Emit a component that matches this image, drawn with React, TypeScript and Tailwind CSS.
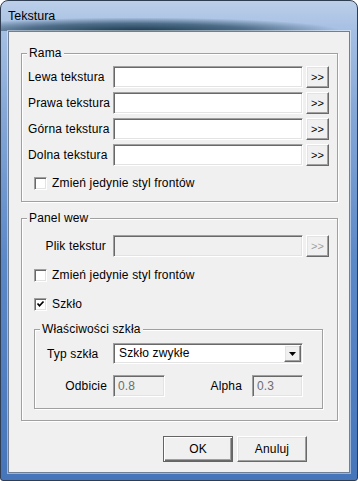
import React from 'react';

const sunken =
  'border border-t-[#a0a0a0] border-l-[#a0a0a0] border-b-white border-r-white shadow-[inset_1px_1px_0_#696969,inset_-1px_-1px_0_#e3e3e3]';
const raised =
  'border border-t-white border-l-white border-b-[#696969] border-r-[#696969] shadow-[inset_-1px_-1px_0_#a0a0a0,inset_1px_1px_0_#e3e3e3] bg-[#f0f0f0]';

function GroupBox({ title, className, children }) {
  return (
    <div
      className={`relative border border-[#a0a0a0] shadow-[inset_1px_1px_0_#fff,1px_1px_0_#fff] ${className}`}
    >
      <span className="absolute -top-[8px] left-[5px] px-[2px] bg-[#f0f0f0] leading-[14px]">
        {title}
      </span>
      {children}
    </div>
  );
}

function Checkbox({ checked = false }) {
  return (
    <span className={`w-[13px] h-[13px] bg-white flex items-center justify-center ${sunken}`}>
      {checked && (
        <svg width="9" height="9" viewBox="0 0 9 9">
          <path d="M1.5 3.5 L3.5 5.8 L7.5 1.5" fill="none" stroke="#000" strokeWidth="1.7" />
        </svg>
      )}
    </span>
  );
}

function TextureRow({ label, disabled = false, right = false }) {
  return (
    <div className="flex items-center h-[22px]">
      <span className={`w-[85px] ${right ? 'text-right pr-[7px]' : ''}`}>{label}</span>
      <div className={`w-[190px] h-[22px] ${disabled ? 'bg-[#f0f0f0]' : 'bg-white'} ${sunken}`} />
      <button
        className={`ml-[3px] w-[23px] h-[22px] flex items-center justify-center text-[11px] leading-none ${raised} ${
          disabled ? 'text-[#a0a0a0]' : 'text-black'
        }`}
      >
        &gt;&gt;
      </button>
    </div>
  );
}

function CheckRow({ label, checked = false }) {
  return (
    <div className="flex items-center h-[22px] pl-[6px] gap-[5px]">
      <Checkbox checked={checked} />
      <span>{label}</span>
    </div>
  );
}

export default function App() {
  return (
    <div className="w-[358px] h-[481px] rounded-t-[8px] rounded-b-[3px] border border-[#2f3d52] bg-[linear-gradient(180deg,#bccfe9_0px,#a5bfe3_30px,#86a8d7_110px,#5b88c7_260px,#4675ba_481px)] flex flex-col font-['Liberation_Sans',Arial,sans-serif] text-[12px] tracking-[0.15px] text-black overflow-hidden">
      <div className="h-[30px] pl-[7px] pt-[8px] leading-[14px] text-[12.5px] tracking-normal bg-[radial-gradient(70%_55%_at_38%_100%,rgba(20,52,72,0.95)_0%,rgba(28,62,86,0.65)_45%,transparent_82%)]">
        Tekstura
      </div>
      <div className="px-[7px] pb-[7px]">
        <div className="w-[342px] h-[442px] bg-[#f0f0f0] border border-[#6e7f96] shadow-[0_0_0_1px_rgba(255,255,255,0.45)] flex flex-col">
          <GroupBox title="Rama" className="mt-[21px] ml-[12px] w-[317px] pt-[12px] pl-[6px] pb-[7px]">
            <div className="flex flex-col gap-[4px]">
              <TextureRow label="Lewa tekstura" />
              <TextureRow label="Prawa tekstura" />
              <TextureRow label="Górna tekstura" />
              <TextureRow label="Dolna tekstura" />
            </div>
            <div className="mt-[6px]">
              <CheckRow label="Zmień jedynie styl frontów" />
            </div>
          </GroupBox>

          <GroupBox title="Panel wew" className="mt-[16px] ml-[12px] w-[317px] pt-[16px] pl-[6px] pb-[11px]">
            <TextureRow label="Plik tekstur" disabled right />
            <div className="mt-[7px]">
              <CheckRow label="Zmień jedynie styl frontów" />
            </div>
            <div className="mt-[7px]">
              <CheckRow label="Szkło" checked />
            </div>
            <GroupBox
              title="Właściwości szkła"
              className="mt-[14px] ml-[6px] w-[289px] pt-[13px] pl-[12px] pb-[11px]"
            >
              <div className="flex items-center h-[21px]">
                <span className="w-[66px]">Typ szkła</span>
                <div className={`w-[190px] h-[21px] bg-white p-[1px] flex ${sunken}`}>
                  <span className="flex-1 pl-[4px] leading-[17px]">Szkło zwykłe</span>
                  <span className={`w-[17px] h-full flex items-center justify-center ${raised}`}>
                    <svg width="7" height="4" viewBox="0 0 7 4">
                      <path d="M0 0 H7 L3.5 4 Z" fill="#000" />
                    </svg>
                  </span>
                </div>
              </div>
              <div className="mt-[11px] flex items-center h-[22px]">
                <span className="w-[66px] text-right pr-[6px]">Odbicie</span>
                <div className={`w-[52px] h-[22px] bg-[#f0f0f0] pl-[4px] leading-[20px] text-[#6d6d6d] ${sunken}`}>
                  0.8
                </div>
                <span className="w-[87px] text-right pr-[10px]">Alpha</span>
                <div className={`w-[51px] h-[22px] bg-[#f0f0f0] pl-[4px] leading-[20px] text-[#6d6d6d] ${sunken}`}>
                  0.3
                </div>
              </div>
            </GroupBox>
          </GroupBox>

          <div className="mt-[15px] flex justify-end gap-[4px] pr-[42px]">
            <button className="w-[70px] h-[26px] border border-[#646464] bg-[#f0f0f0] shadow-[inset_1px_1px_0_#fff,inset_-1px_-1px_0_#696969,inset_-2px_-2px_0_#a0a0a0]">
              OK
            </button>
            <button className={`w-[70px] h-[26px] ${raised}`}>Anuluj</button>
          </div>
        </div>
      </div>
    </div>
  );
}
